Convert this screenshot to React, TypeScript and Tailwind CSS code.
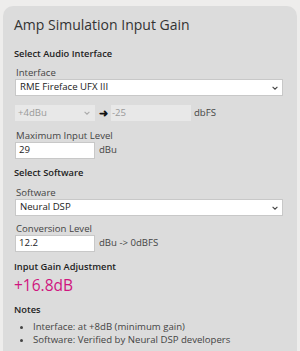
import React from "react"

const Chevron = ({ className }: { className?: string }) => (
  <svg width="6" height="4" viewBox="0 0 6 4" className={className}>
    <path d="M0.6 0.8l2.4 2.4 2.4-2.4" fill="none" stroke="currentColor" strokeWidth="1.1" />
  </svg>
)

const Select = ({ value }: { value: string }) => (
  <div className="flex h-[17px] w-[268px] items-center justify-between border border-[#c8c8c8] bg-white pl-[4px] pr-[4px] text-[9.6px] text-[#222]">
    <span>{value}</span>
    <Chevron className="text-[#444]" />
  </div>
)

const Field = ({ value, unit }: { value: string; unit: string }) => (
  <div className="flex items-center gap-[4px]">
    <div className="flex h-[17px] w-[80px] items-center border border-[#c8c8c8] bg-white px-[3px] text-[9.6px] text-[#222]">
      {value}
    </div>
    <span className="text-[9.6px] text-[#444]">{unit}</span>
  </div>
)

const Heading = ({ children, className }: { children: React.ReactNode; className?: string }) => (
  <h2 className={`text-[9.3px] font-semibold leading-[13px] text-[#222] ${className ?? ""}`}>{children}</h2>
)

const Label = ({ children, className }: { children: React.ReactNode; className?: string }) => (
  <div className={`ml-[2px] text-[9.6px] leading-[13px] text-[#444] ${className ?? ""}`}>{children}</div>
)

export default function App() {
  return (
    <div
      className="h-[351px] overflow-hidden bg-[#eeedec] px-[3px] pt-[6px] text-[#333]"
      style={{ fontFamily: '"Open Sans", sans-serif' }}
    >
      <div className="h-[400px] rounded-t-[10px] bg-[#dcdcdc] pl-[11px] pr-[13px] pt-[9px]">
        <h1 className="text-[14px] leading-[19px] text-[#333]">Amp Simulation Input Gain</h1>

        <Heading className="mt-[13px]">Select Audio Interface</Heading>
        <Label className="mt-[6px]">Interface</Label>
        <div className="ml-[1px]">
          <Select value="RME Fireface UFX III" />
        </div>
        <div className="ml-[1px] mt-[9px] flex items-center text-[9.6px]">
          <div className="flex h-[16px] w-[80px] items-center justify-between bg-[#e8e8e8] pl-[3px] pr-[5px] text-[#9a9a9a]">
            <span>+4dBu</span>
            <Chevron className="text-[#aaa]" />
          </div>
          <span className="ml-[4px] mr-[3px] text-[10.5px] font-bold leading-none text-[#111]">➜</span>
          <div className="flex h-[16px] w-[80px] items-center bg-[#e8e8e8] pl-[1px] text-[#9a9a9a]">-25</div>
          <span className="ml-[3px] text-[#444]">dbFS</span>
        </div>

        <Label className="mt-[8px]">Maximum Input Level</Label>
        <div className="ml-[1px]">
          <Field value="29" unit="dBu" />
        </div>

        <Heading className="mt-[7px]">Select Software</Heading>
        <Label className="mt-[7px]">Software</Label>
        <div className="ml-[1px]">
          <Select value="Neural DSP" />
        </div>
        <Label className="mt-[6px]">Conversion Level</Label>
        <div className="ml-[1px]">
          <Field value="12.2" unit="dBu -> 0dBFS" />
        </div>

        <Heading className="mt-[8px]">Input Gain Adjustment</Heading>
        <div className="mt-[1px] text-[15.5px] leading-[22px] text-[#d0157f]">+16.8dB</div>

        <Heading className="mt-[7px]">Notes</Heading>
        <ul className="ml-[19px] mt-[4px] list-disc text-[9.6px] leading-[13px] text-[#444]">
          <li>Interface: at +8dB (minimum gain)</li>
          <li>Software: Verified by Neural DSP developers</li>
        </ul>
      </div>
    </div>
  )
}
